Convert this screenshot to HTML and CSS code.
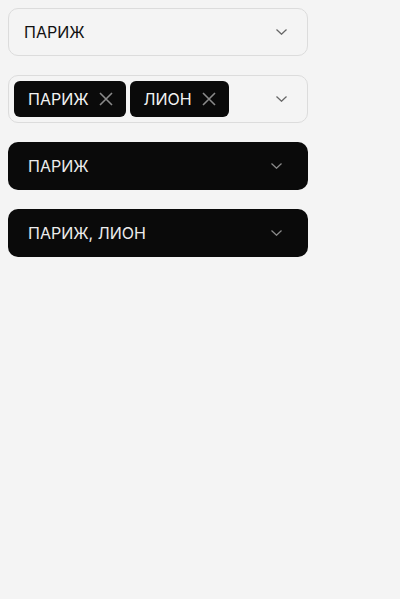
FILE: index.html
```html
<!DOCTYPE html>
<html lang="ru">
<head>
<meta charset="utf-8">
<link rel="stylesheet" href="styles.css">
</head>
<body>
<div class="stack">
  <div class="select light">
    <span class="value">ПАРИЖ</span>
    <svg class="chev" width="11" height="6" viewBox="0 0 11 6"><path d="M0.5 0.5 L5.5 5.2 L10.5 0.5" fill="none" stroke="#666" stroke-width="1.3"/></svg>
  </div>
  <div class="select light multi">
    <div class="chips">
      <span class="chip">ПАРИЖ<svg class="x" width="14" height="14" viewBox="0 0 14 14"><path d="M1 1 L13 13 M13 1 L1 13" stroke="#8a8a8a" stroke-width="1.6"/></svg></span>
      <span class="chip">ЛИОН<svg class="x" width="14" height="14" viewBox="0 0 14 14"><path d="M1 1 L13 13 M13 1 L1 13" stroke="#8a8a8a" stroke-width="1.6"/></svg></span>
    </div>
    <svg class="chev" width="11" height="6" viewBox="0 0 11 6"><path d="M0.5 0.5 L5.5 5.2 L10.5 0.5" fill="none" stroke="#666" stroke-width="1.3"/></svg>
  </div>
  <div class="select dark">
    <span class="value">ПАРИЖ</span>
    <svg class="chev" width="11" height="6" viewBox="0 0 11 6"><path d="M0.5 0.5 L5.5 5.2 L10.5 0.5" fill="none" stroke="#8a8a8a" stroke-width="1.3"/></svg>
  </div>
  <div class="select dark">
    <span class="value">ПАРИЖ, ЛИОН</span>
    <svg class="chev" width="11" height="6" viewBox="0 0 11 6"><path d="M0.5 0.5 L5.5 5.2 L10.5 0.5" fill="none" stroke="#8a8a8a" stroke-width="1.3"/></svg>
  </div>
</div>
</body>
</html>
```
FILE: styles.css
```css
html, body {
  margin: 0;
  padding: 0;
  background: #f4f4f4;
}
body {
  padding: 8px;
  font-family: Inter, "Noto Sans", sans-serif;
  font-size: 16px;
}
.stack {
  width: 300px;
  display: flex;
  flex-direction: column;
  gap: 19px;
}
.select {
  box-sizing: border-box;
  height: 48px;
  display: flex;
  align-items: center;
  justify-content: space-between;
  border-radius: 10px;
}
.light {
  border: 1px solid #dcdcdc;
  background: #f4f4f4;
  color: #111;
  padding: 0 20px 0 15px;
}
.light.multi {
  padding: 5px 20px 5px 5px;
}
.chips {
  display: flex;
  gap: 4px;
  height: 100%;
}
.chip {
  display: flex;
  align-items: center;
  gap: 10px;
  background: #0a0a0a;
  color: #f2f2f2;
  border-radius: 6px;
  padding: 0 13px 0 14px;
  height: 36px;
}
.x {
  display: block;
}
.dark {
  background: #0a0a0a;
  color: #ececec;
  padding: 0 26px 0 20px;
}
.chev {
  display: block;
}
```
